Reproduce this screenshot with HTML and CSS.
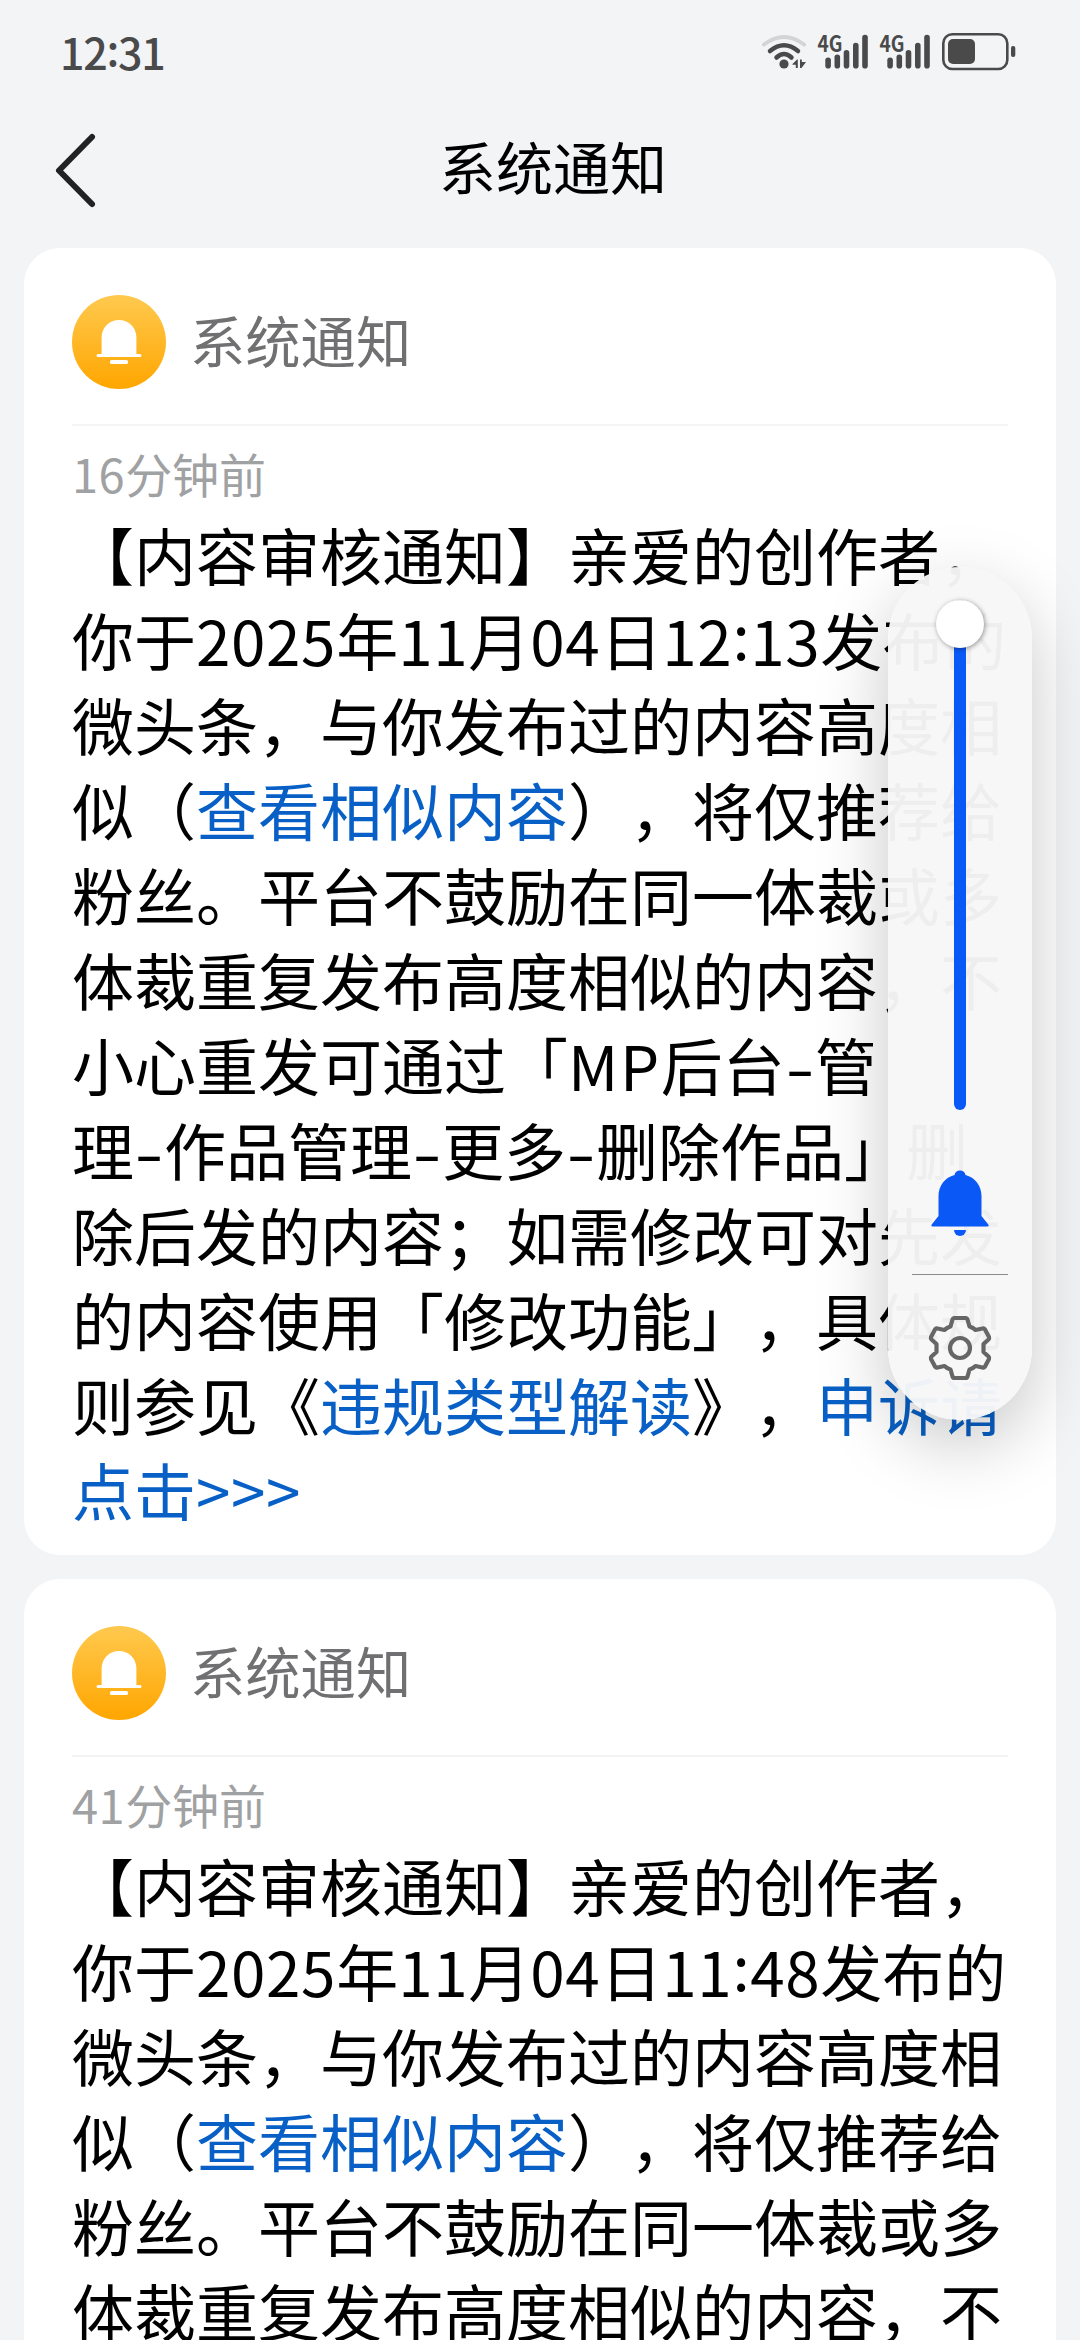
FILE: index.html
```html
<!DOCTYPE html>
<html lang="zh-CN">
<head>
<meta charset="utf-8">
<title>系统通知</title>
<link rel="stylesheet" href="styles.css">
</head>
<body>
<div class="screen">
  <div class="status">
    <span class="clock">12<span class="colon">:</span>31</span>
    <svg class="status-icons" viewBox="756 28 264 48" width="264" height="48">
      <g fill="none" stroke-linecap="round" stroke="#4a4a4b">
        <path d="M764 44.500Q784 29.500 804 44.500" stroke="#d3d4d5" stroke-width="4"/>
        <path d="M770 51Q784 39.500 798 51" stroke-width="4.500"/>
        <path d="M776.500 57.500Q784 50.500 791.500 57.500" stroke-width="4.500"/>
      </g>
      <g fill="#4a4a4b">
        <circle cx="784" cy="64" r="4.600"/>
        <path d="M792.500 64l4.500-4.500h.8v8.500h-2v-3.200h-3.300zM800 59.500h1.800v2.500h4.200l-4.500 6h-1.500z"/>
        <g id="sim">
          <text class="net" x="817.500" y="51.500" textLength="25" lengthAdjust="spacingAndGlyphs">4G</text>
          <rect x="825.300" y="57.500" width="5.600" height="11" rx="2.800"/>
          <rect x="834.500" y="54.500" width="5.600" height="14" rx="2.800"/>
          <rect x="843.700" y="50" width="5.600" height="18.500" rx="2.800"/>
          <rect x="853" y="42.700" width="5.600" height="25.800" rx="2.800"/>
          <rect x="862.200" y="34.700" width="5.600" height="33.800" rx="2.800"/>
        </g>
        <use href="#sim" x="62"/>
        <rect x="948" y="39" width="27" height="25" rx="5"/>
        <rect x="1011" y="46" width="4.300" height="11" rx="2"/>
      </g>
      <rect x="943.300" y="34.300" width="64" height="34.700" rx="9" fill="none" stroke="#4a4a4b" stroke-width="2.600"/>
    </svg>
  </div>
  <header class="nav">
    <svg class="back" viewBox="0 0 48 80" width="48" height="80"><path d="M40 7L7 40.500L40 74" fill="none" stroke="#212223" stroke-width="6" stroke-linecap="round" stroke-linejoin="round"/></svg>
    <h1>系统通知</h1>
  </header>

  <main class="list">
    <article class="card">
      <div class="head">
        <svg viewBox="0 0 94 94" width="94" height="94">
          <defs><linearGradient id="amber" x1="0" y1="0" x2="0" y2="1"><stop offset="0" stop-color="#ffc94f"/><stop offset="1" stop-color="#ffa600"/></linearGradient></defs>
          <circle cx="47" cy="47" r="47" fill="url(#amber)"/>
          <path d="M29.600 59V42.400a17.400 17.400 0 0 1 34.800 0V59H68a1.500 1.500 0 0 1 0 3H26a1.500 1.500 0 0 1 0-3z" fill="#fff"/>
          <rect x="38" y="65" width="18" height="4" rx="1.500" fill="#fff"/>
        </svg>
        <h2>系统通知</h2>
      </div>
      <div class="time"><span class="n">16</span>分钟前</div>
      <p class="body">
        <span class="line">【内容审核通知】亲爱的创作者，</span>
        <span class="line">你于<span class="n">2025</span>年<span class="n">11</span>月<span class="n">04</span>日<span class="n">12<span class="colon">:</span>13</span>发布的</span>
        <span class="line">微头条，与你发布过的内容高度相</span>
        <span class="line">似（<a>查看相似内容</a>），将仅推荐给</span>
        <span class="line">粉丝。平台不鼓励在同一体裁或多</span>
        <span class="line">体裁重复发布高度相似的内容，不</span>
        <span class="line">小心重发可通过「<span class="caps">MP</span>后台<span class="dash">-</span>管</span>
        <span class="line">理<span class="dash">-</span>作品管理<span class="dash">-</span>更多<span class="dash">-</span>删除作品」删</span>
        <span class="line">除后发的内容；如需修改可对先发</span>
        <span class="line">的内容使用「修改功能」，具体规</span>
        <span class="line">则参见《<a>违规类型解读</a>》，<a>申诉请</a></span>
        <span class="line"><a>点击<span class="n">&gt;&gt;&gt;</span></a></span>
      </p>
    </article>

    <article class="card">
      <div class="head">
        <svg viewBox="0 0 94 94" width="94" height="94">
          <circle cx="47" cy="47" r="47" fill="url(#amber)"/>
          <path d="M29.600 59V42.400a17.400 17.400 0 0 1 34.800 0V59H68a1.500 1.500 0 0 1 0 3H26a1.500 1.500 0 0 1 0-3z" fill="#fff"/>
          <rect x="38" y="65" width="18" height="4" rx="1.500" fill="#fff"/>
        </svg>
        <h2>系统通知</h2>
      </div>
      <div class="time"><span class="n">41</span>分钟前</div>
      <p class="body">
        <span class="line">【内容审核通知】亲爱的创作者，</span>
        <span class="line">你于<span class="n">2025</span>年<span class="n">11</span>月<span class="n">04</span>日<span class="n">11<span class="colon">:</span>48</span>发布的</span>
        <span class="line">微头条，与你发布过的内容高度相</span>
        <span class="line">似（<a>查看相似内容</a>），将仅推荐给</span>
        <span class="line">粉丝。平台不鼓励在同一体裁或多</span>
        <span class="line">体裁重复发布高度相似的内容，不</span>
      </p>
    </article>
  </main>

  <aside class="volume">
    <div class="slider"><div class="knob"></div></div>
    <svg class="bell" viewBox="0 0 58 68" width="58" height="68" fill="#0a59f7">
      <path d="M23.500 6a5.600 5.600 0 0 1 11 0C44 8.500 50.500 16.500 50.500 27v20l6.800 8.500q1 2-1 2H1.700q-2 0-1-2L7.500 47V27C7.500 16.500 14 8.500 23.500 6z"/>
      <path d="M23 61h12a6 6 0 0 1-12 0z"/>
    </svg>
    <hr>
    <svg class="gear" viewBox="-33 -33 66 66" width="66" height="66" fill="none" stroke="#666" stroke-width="4.200" stroke-linejoin="round">
      <path d="M-5.500-30H5.500Q7-30 7.500-28.500L9.500-21.500Q13-20.500 15.500-18L22.500-19.500Q24-20 25-18.500L29-11Q29.500-9.500 28.500-8.500L23.500-4V4L28.500 8.500Q29.500 9.500 29 11L25 18.500Q24 20 22.500 19.500L15.500 18Q13 20.500 9.500 21.500L7.500 28.500Q7 30 5.500 30H-5.500Q-7 30-7.500 28.500L-9.500 21.500Q-13 20.500-15.500 18L-22.500 19.500Q-24 20-25 18.500L-29 11Q-29.500 9.500-28.500 8.500L-23.500 4V-4L-28.500-8.500Q-29.500-9.500-29-11L-25-18.500Q-24-20-22.500-19.500L-15.500-18Q-13-20.500-9.500-21.500L-7.500-28.500Q-7-30-5.500-30z"/>
      <circle r="10"/>
    </svg>
  </aside>
</div>
</body>
</html>
```
FILE: styles.css
```css
* { box-sizing: border-box; }
html, body { margin: 0; overflow: hidden; }
body {
  font-family: "Noto Sans CJK SC", sans-serif;
  text-spacing-trim: space-all;
  background: #f3f4f6;
  color: #000;
}
.screen {
  position: relative;
  width: 1080px;
  height: 2340px;
  overflow: hidden;
  background: #f3f4f6;
}
.status {
  display: flex;
  justify-content: space-between;
  align-items: center;
  height: 104px;
  padding: 0 60px;
}
.clock {
  margin-top: -2px;
  font-size: 43px;
  font-weight: 500;
  line-height: 60px;
  letter-spacing: -1.3px;
  color: #4a4a4b;
}
.colon {
  display: inline-block;
  transform: translateY(-0.09em);
}
.net {
  font-family: "Noto Sans CJK SC", sans-serif;
  font-size: 22px;
  font-weight: 700;
}
.nav {
  display: grid;
  grid-template-columns: 52px 1fr 52px;
  align-items: center;
  height: 132px;
  padding: 0 52px;
}
.nav .back { display: block; }
.nav h1 {
  margin: 0;
  font-size: 57px;
  font-weight: 400;
  line-height: 80px;
  text-align: center;
  padding: 0 0 10px 26px;
}
.list {
  display: flex;
  flex-direction: column;
  gap: 24px;
  padding: 12px 24px 0;
}
.card {
  height: 1307px;
  flex: none;
  padding: 0 48px;
  border-radius: 36px;
  background: #fff;
}
.head {
  display: flex;
  align-items: center;
  gap: 24px;
  height: 178px;
  padding-top: 12px;
  border-bottom: 2px solid #f3f4f5;
}
.head svg { flex: none; }
.head h2 {
  margin: 0;
  padding-bottom: 7px;
  font-size: 55.300px;
  font-weight: 400;
  line-height: 80px;
  color: #707072;
}
.time {
  margin-top: 17px;
  font-size: 47px;
  line-height: 60px;
  color: #a0a1a3;
}
.body {
  margin: 9px 0 0;
  font-size: 62px;
  line-height: 85px;
}
.line { display: block; white-space: nowrap; }
.n { letter-spacing: 0.01em; }
.caps { letter-spacing: 0.025em; }
.dash {
  display: inline-block;
  width: 30px;
  text-align: center;
  transform: scaleX(1.35);
}
.body a { color: #0860c6; }
.volume {
  position: absolute;
  left: 888px;
  top: 567px;
  width: 144px;
  height: 853px;
  padding-top: 33px;
  display: flex;
  flex-direction: column;
  align-items: center;
  border-radius: 72px;
  background: rgba(247, 247, 248, 0.965);
  box-shadow: 0 24px 70px rgba(0, 0, 0, 0.22);
}
.slider {
  width: 12px;
  height: 510px;
  display: flex;
  justify-content: center;
  border-radius: 6px;
  background: #0a59f7;
}
.knob {
  flex: none;
  width: 48px;
  height: 48px;
  border-radius: 50%;
  background: #fff;
  box-shadow: 1px 1px 5px rgba(0, 0, 0, 0.4);
}
.bell { margin-top: 59px; flex: none; }
.volume hr {
  width: 96px;
  height: 1px;
  margin: 37px 0 0;
  border: 0;
  background: #8c8c8d;
}
.gear { margin-top: 40px; flex: none; }
```
